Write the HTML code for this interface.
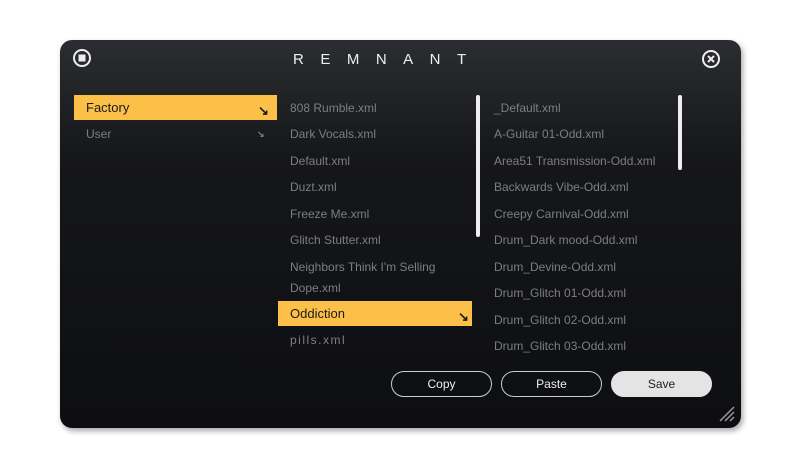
<!DOCTYPE html><html><head><style>
body{margin:0;width:800px;height:468px;background:#fff;position:relative;overflow:hidden;font-family:"Liberation Sans",sans-serif}
.p{position:absolute;left:60px;top:40px;width:681px;height:388px;border-radius:12px;background:linear-gradient(#2b2d31 0%,#16171b 30%,#0d0e11 100%);box-shadow:2px 3px 6px rgba(0,0,0,.35)}
.t{position:absolute;font-size:12px;color:#7d7e82;white-space:nowrap}
.hl{position:absolute;background:#fcc048;height:25px}
.hl span{position:absolute;left:12px;top:5px;font-size:13px;color:#1a1a1a}
.ar{position:absolute;font-size:9px;font-weight:bold}
.sb{position:absolute;width:4px;background:#eee;border-radius:2px}
.b{position:absolute;top:371px;width:99px;height:24px;border:1.5px solid #ccc;border-radius:13px;color:#eee;font-size:12px;text-align:center;line-height:24px}
.logo{position:absolute;left:293px;top:51px;font-size:15px;letter-spacing:16.5px;color:#eee;font-weight:normal}
</style></head><body>
<div class="p"></div>
<svg style="position:absolute;left:72px;top:48px" width="20" height="20"><circle cx="10" cy="10" r="8" fill="none" stroke="#eee" stroke-width="2"/><rect x="6.5" y="6.5" width="7" height="7" fill="#eee"/></svg>
<svg style="position:absolute;left:701px;top:49px" width="20" height="20"><circle cx="10" cy="10" r="8" fill="none" stroke="#eee" stroke-width="2"/><path d="M7 7L13 13M13 7L7 13" stroke="#eee" stroke-width="2"/></svg>
<div class="logo">REMNANT</div>
<div class="hl" style="left:74px;top:95px;width:203px"><span>Factory</span><span class="ar" style="left:184px;top:8px">↘</span></div>
<div class="t" style="left:86px;top:127px">User</div><div class="t ar" style="left:257px;top:129px">↘</div>
<div class="t" style="left:290px;top:101px">808 Rumble.xml</div>
<div class="t" style="left:290px;top:127px">Dark Vocals.xml</div>
<div class="t" style="left:290px;top:154px">Default.xml</div>
<div class="t" style="left:290px;top:180px">Duzt.xml</div>
<div class="t" style="left:290px;top:207px">Freeze Me.xml</div>
<div class="t" style="left:290px;top:233px">Glitch Stutter.xml</div>
<div class="t" style="left:290px;top:260px">Neighbors Think I'm Selling</div>
<div class="t" style="left:290px;top:281px">Dope.xml</div>
<div class="hl" style="left:278px;top:301px;width:194px"><span>Oddiction</span><span class="ar" style="left:180px;top:8px">↘</span></div>
<div class="t" style="left:290px;top:333px;letter-spacing:1.5px">pills.xml</div>
<div class="sb" style="left:476px;top:95px;height:142px"></div>
<div class="t" style="left:494px;top:101px">_Default.xml</div>
<div class="t" style="left:494px;top:127px">A-Guitar 01-Odd.xml</div>
<div class="t" style="left:494px;top:154px">Area51 Transmission-Odd.xml</div>
<div class="t" style="left:494px;top:180px">Backwards Vibe-Odd.xml</div>
<div class="t" style="left:494px;top:207px">Creepy Carnival-Odd.xml</div>
<div class="t" style="left:494px;top:233px">Drum_Dark mood-Odd.xml</div>
<div class="t" style="left:494px;top:260px">Drum_Devine-Odd.xml</div>
<div class="t" style="left:494px;top:286px">Drum_Glitch 01-Odd.xml</div>
<div class="t" style="left:494px;top:313px">Drum_Glitch 02-Odd.xml</div>
<div class="t" style="left:494px;top:339px">Drum_Glitch 03-Odd.xml</div>
<div class="sb" style="left:678px;top:95px;height:75px"></div>
<div class="b" style="left:391px">Copy</div>
<div class="b" style="left:501px">Paste</div>
<div class="b" style="left:611px;background:#e4e4e4;color:#222;border-color:#e4e4e4">Save</div>
<svg style="position:absolute;left:718px;top:405px" width="18" height="18"><path d="M2 16L16 2M7 16L16 7M12 16L16 12" stroke="#999" stroke-width="1.5"/></svg>
</body></html>
